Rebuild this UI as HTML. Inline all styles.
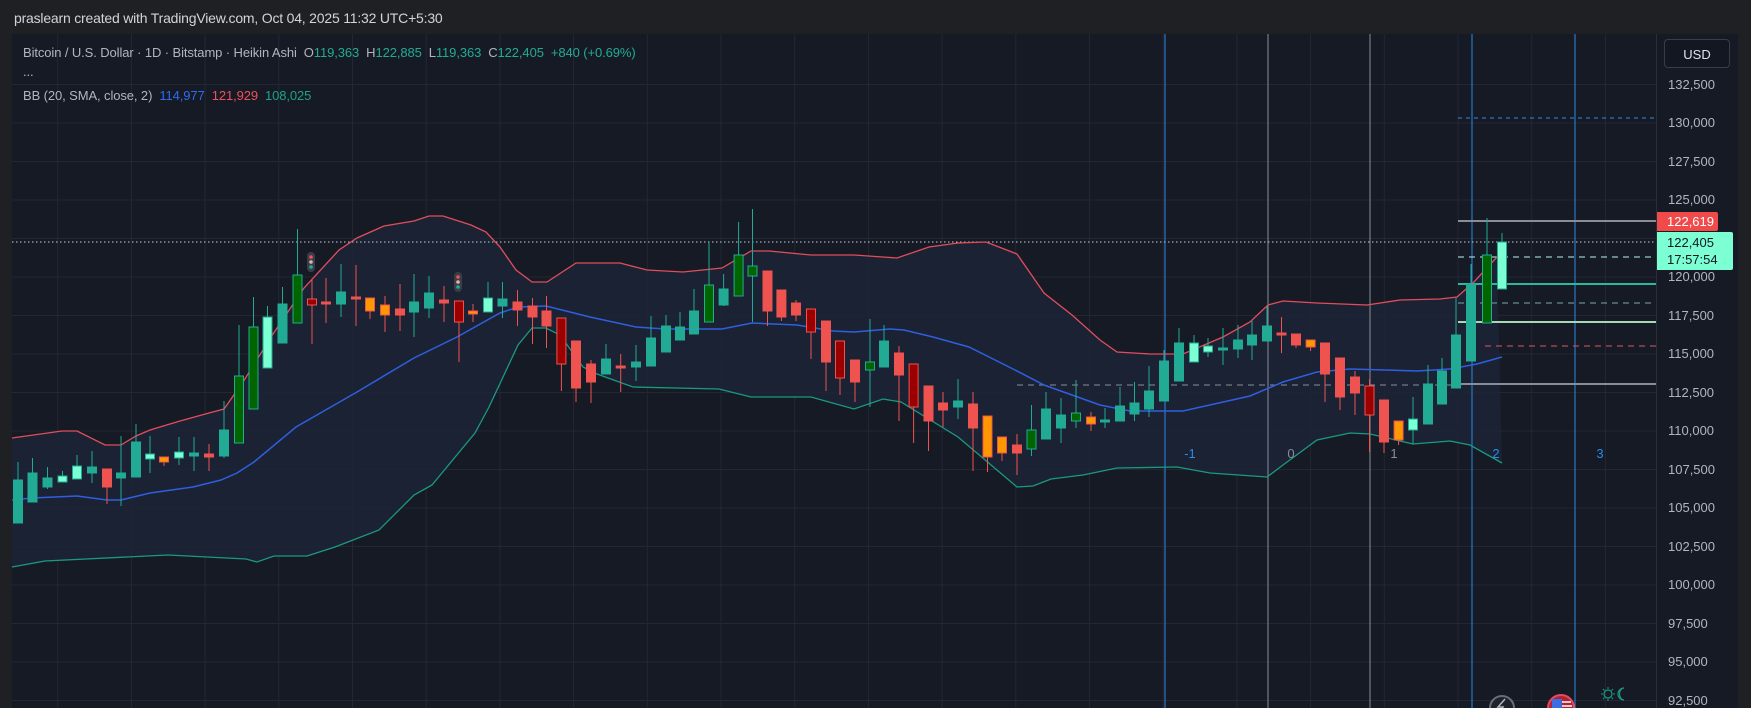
<!DOCTYPE html>
<html><head><meta charset="utf-8">
<style>
html,body{margin:0;padding:0;width:1751px;height:708px;overflow:hidden;background:#1f2023;font-family:"Liberation Sans",sans-serif;}
#hdr{position:absolute;left:14px;top:10px;color:#d1d4dc;font-size:14px;letter-spacing:-0.2px}
#chart{position:absolute;left:12px;top:34px;width:1726px;height:674px;background:#161a25;}
svg{position:absolute;left:0;top:0}
.lg{position:absolute;left:23px;font-size:13px;color:#b2b5be;white-space:nowrap;letter-spacing:-0.1px}
.g{color:#22ab94}
.ax{position:absolute;left:1668px;font-size:13px;color:#b2b5be}
</style></head><body>
<div id="hdr">praslearn created with TradingView.com, Oct 04, 2025 11:32 UTC+5:30</div>
<div id="chart"></div>
<svg width="1751" height="708" id="s"></svg>
<div class="lg" style="top:45px">Bitcoin / U.S. Dollar · 1D · Bitstamp · Heikin Ashi&nbsp; O<span class="g">119,363</span>&nbsp; H<span class="g">122,885</span>&nbsp; L<span class="g">119,363</span>&nbsp; C<span class="g">122,405</span>&nbsp; <span class="g">+840 (+0.69%)</span></div>
<div class="lg" style="top:64px">...</div>
<div class="lg" style="top:88px">BB (20, SMA, close, 2)&nbsp; <span style="color:#2f6bf0">114,977</span>&nbsp; <span style="color:#f0505d">121,929</span>&nbsp; <span style="color:#1ea287">108,025</span></div>
<div style="position:absolute;left:1664px;top:39px;width:66px;height:29px;border:1px solid #3a3d48;border-radius:4px;background:#131722;color:#e0e3eb;font-size:13px;line-height:29px;text-align:center;box-sizing:border-box">USD</div>
<div id="axl"></div>
<div style="position:absolute;left:1657px;top:212px;width:61px;height:19px;background:#f04a4a;color:#fff;font-size:13px;line-height:19px;padding-left:10px;box-sizing:border-box;border-radius:0 2px 2px 0">122,619</div>
<div style="position:absolute;left:1657px;top:232px;width:76px;height:38px;background:#7dffd4;color:#131722;font-size:13px;line-height:17px;padding:2px 0 0 10px;box-sizing:border-box;border-radius:0 2px 2px 0">122,405<br>17:57:54</div>
<script>
const s=document.getElementById('s');let h='';
// grid
for(let p=92500;p<=132500;p+=2500){let y=277-(p-120000)/2500*38.5;h+=`<line x1="12" x2="1656" y1="${y}" y2="${y}" stroke="#232734" stroke-width="1"/>`;}
for(let x=1458+73.7*3;x>12;x-=73.7){if(x<1656)h+=`<line x1="${x}" x2="${x}" y1="34" y2="708" stroke="#232734"/>`;}
h+=`<line x1="1656.5" x2="1656.5" y1="34" y2="708" stroke="#2a2e39"/>`;
h+=`<rect x="1738" y="34" width="13" height="674" fill="#1f2023"/>`;
const up=[[12,438],[62,431],[77,431],[105,445],[121,445],[136,436],[150,430],[180,421],[209,413],[224,409],[243,382],[271,337],[304,288],[339,250],[357,238],[384,226],[414,221],[429,216],[443,216],[471,225],[486,232],[500,247],[516,270],[532,282],[547,282],[576,263],[620,263],[647,270],[683,272],[722,268],[751,251],[769,251],[811,255],[854,255],[897,258],[929,247],[958,243],[986,242],[1017,254],[1044,293],[1072,315],[1100,340],[1117,352],[1150,354],[1183,354],[1223,337],[1250,322],[1268,305],[1283,301],[1317,303],[1367,305],[1400,300],[1440,299],[1457,297],[1473,283],[1497,257]];
const lo=[[12,567],[45,561],[168,555],[246,559],[257,562],[274,556],[307,556],[335,547],[379,530],[414,495],[432,485],[475,433],[489,407],[518,345],[532,328],[546,328],[560,335],[583,367],[597,374],[633,387],[719,389],[751,397],[811,397],[854,409],[883,399],[901,402],[958,437],[1017,487],[1033,486],[1051,479],[1083,475],[1117,468],[1177,467],[1210,473],[1267,477],[1283,465],[1317,440],[1350,433],[1370,434],[1413,444],[1450,441],[1470,445],[1502,463]];
const mid=[[12,500],[32,498],[77,496],[107,500],[121,500],[150,493],[193,487],[221,480],[237,473],[254,462],[296,427],[357,392],[414,358],[457,337],[500,313],[518,307],[546,306],[590,317],[636,327],[665,329],[722,329],[752,323],[797,325],[833,331],[854,332],[890,329],[904,330],[933,337],[969,347],[1015,370],[1044,385],[1100,405],[1130,411],[1183,411],[1250,396],[1283,382],[1317,372],[1350,369],[1417,371],[1450,369],[1477,364],[1502,357]];
const pts=a=>a.map(p=>p.join(',')).join(' ');
h+=`<polygon points="${pts(up)} ${pts(lo.slice().reverse())}" fill="#1b2436" opacity="0.85"/>`;
// vertical markers
[[1165,'#2a8be8'],[1268,'#8a8d96'],[1370,'#8a8d96'],[1472,'#2a8be8'],[1575,'#2a8be8']].forEach(v=>h+=`<line x1="${v[0]}" x2="${v[0]}" y1="34" y2="708" stroke="${v[1]}" stroke-width="1"/>`);
// horizontal levels
h+=`<line x1="12" x2="1656" y1="242" y2="242" stroke="#c8ccd6" stroke-dasharray="1.5,2.5"/>`;
h+=`<line x1="1458" x2="1656" y1="118" y2="118" stroke="#2a8be8" stroke-dasharray="4,4"/>`;
h+=`<line x1="1458" x2="1656" y1="221" y2="221" stroke="#8a8d96" stroke-width="2"/>`;
h+=`<line x1="1458" x2="1656" y1="257" y2="257" stroke="#b8f5ea" stroke-dasharray="6,5"/>`;
h+=`<line x1="1458" x2="1656" y1="284" y2="284" stroke="#2bb89f" stroke-width="2"/>`;
h+=`<line x1="1458" x2="1656" y1="303" y2="303" stroke="#7aa8a0" stroke-dasharray="6,5"/>`;
h+=`<line x1="1458" x2="1656" y1="322" y2="322" stroke="#a7d8b5" stroke-width="2"/>`;
h+=`<line x1="1485" x2="1656" y1="346" y2="346" stroke="#e0545f" stroke-dasharray="6,5"/>`;
h+=`<line x1="1017" x2="1458" y1="385" y2="385" stroke="#8a8d96" stroke-dasharray="6,5"/>`;
h+=`<line x1="1458" x2="1656" y1="384" y2="384" stroke="#8a8d96" stroke-width="2"/>`;
h+=`<polyline points="${pts(up)}" fill="none" stroke="#e04e5c" stroke-width="1.3"/>`;
h+=`<polyline points="${pts(lo)}" fill="none" stroke="#1a9a80" stroke-width="1.3"/>`;
h+=`<polyline points="${pts(mid)}" fill="none" stroke="#2f5fe0" stroke-width="1.5"/>`;
const C={T:['#22ab94','#22ab94','#22ab94'],M:['#7dffd4','#22ab94','#22ab94'],G:['#006400','#22ab94','#22ab94'],R:['#ef5350','#ef5350','#ef5350'],D:['#9b0000','#ef5350','#ef5350'],O:['#ff9800','#ef5350','#ef5350']};
const K=[[18,480,523,462,523,'T'],[32.5,473,502,458,502,'T'],[47.5,478,487,467,489,'T'],[62.5,476,482,471,482,'M'],[77,466,479,455,479,'M'],[92,467,473,451,483,'T'],[107,469,487,469,504,'R'],[121,473,478,436,506,'T'],[136,442,477,424,477,'T'],[150,454,459,436,473,'M'],[164,457,462,457,466,'O'],[179,452,458,437,465,'M'],[194,453,456,437,471,'T'],[209,454,457,444,471,'R'],[224,430,456,401,458,'T'],[239,376,443,325,443,'G'],[253.5,327,409,297,409,'G'],[267.5,317,368,306,368,'M'],[282.5,304,343,287,343,'T'],[297.5,275,323,229,323,'G'],[312,299,305,280,344,'D'],[326,302,304,278,323,'R'],[341,292,304,264,317,'T'],[356,297,298,265,326,'R'],[370,298,311,298,319,'O'],[385,305,315,296,332,'O'],[400,309,315,284,331,'R'],[414,302,312,274,337,'T'],[429,293,308,276,318,'T'],[444,300,303,286,322,'R'],[459,301,322,301,362,'D'],[473,311,314,304,322,'O'],[488,298,312,282,312,'M'],[502.5,299,306,282,318,'T'],[517.5,302,310,290,326,'R'],[532.5,306,317,298,344,'R'],[546.5,311,326,296,348,'R'],[561.4,318,364,318,391,'D'],[576,341,388,341,402,'R'],[591,364,382,360,403,'R'],[606,359,374,344,374,'T'],[620.7,366,368,354,392,'R'],[636,362,367,345,381,'T'],[651,338,366,316,366,'T'],[666,326,352,315,352,'T'],[680,327,340,312,340,'T'],[694,311,334,289,334,'T'],[709,285,322,242,322,'G'],[723.6,289,305,274,306,'T'],[738.6,255,296,222,296,'G'],[752.5,266,276,209,322,'G'],[767.5,271,311,271,326,'R'],[781.4,290,317,290,321,'R'],[796,303,315,300,321,'R'],[811,309,332,309,359,'D'],[826,321,362,321,391,'R'],[840,341,378,341,395,'D'],[855,360,382,360,402,'R'],[870,362,370,319,407,'G'],[884,341,367,325,367,'T'],[899,353,375,346,421,'R'],[913.6,364,407,364,443,'D'],[928.5,386,421,386,451,'R'],[943,403,410,392,427,'R'],[958,401,407,379,419,'T'],[973,404,428,392,471,'R'],[987.5,416,457,416,472,'O'],[1002,437,453,437,461,'O'],[1017,445,453,434,475,'R'],[1031.5,430,449,405,456,'G'],[1046,409,439,392,439,'T'],[1061,415,428,398,443,'T'],[1076,413,421,380,428,'G'],[1091,417,424,412,431,'O'],[1105,420,422,408,428,'T'],[1120,406,421,387,421,'T'],[1134.5,403,414,382,421,'T'],[1149,391,409,366,417,'T'],[1164,361,401,350,401,'T'],[1179,343,381,328,381,'T'],[1194,343,362,335,362,'M'],[1208,346,352,338,357,'M'],[1223,348,349,328,365,'T'],[1238,340,349,325,358,'T'],[1252,335,345,321,360,'T'],[1267,326,341,306,341,'T'],[1281.5,333,335,317,353,'R'],[1296,334,345,334,348,'R'],[1310.6,340,347,340,351,'O'],[1325,343,374,343,402,'R'],[1340,358,397,358,410,'R'],[1355,377,393,371,415,'R'],[1369.5,386,415,379,452,'D'],[1384,400,442,400,453,'R'],[1398.6,421,440,421,445,'O'],[1413,419,430,397,444,'M'],[1428,384,424,365,424,'T'],[1442,371,404,358,404,'T'],[1456,335,388,298,388,'T'],[1471,284,361,264,361,'T'],[1487,255,323,218,323,'G'],[1502,242,289,233,289,'M']];
K.forEach(k=>{const c=C[k[5]];const x=k[0];h+=`<line x1="${x}" x2="${x}" y1="${k[3]}" y2="${k[4]}" stroke="${c[2]}" stroke-width="1"/>`;
let bh=Math.max(k[2]-k[1],2);h+=`<rect x="${x-4.5}" y="${k[1]}" width="9" height="${bh}" fill="${c[0]}" stroke="${c[1]}" stroke-width="1"/>`;});
// traffic lights
[[311,262],[458,282]].forEach(t=>{h+=`<rect x="${t[0]-4}" y="${t[1]-10}" width="8" height="20" rx="4" fill="#3a3d48"/><circle cx="${t[0]}" cy="${t[1]-5}" r="1.8" fill="#ef5350"/><circle cx="${t[0]}" cy="${t[1]}" r="1.8" fill="#e8b0b0"/><circle cx="${t[0]}" cy="${t[1]+5}" r="1.8" fill="#22ab94"/>`;});
// labels
[[1190,'-1','#2a8be8'],[1291,'0','#8a8d96'],[1394,'1','#8a8d96'],[1496,'2','#2a8be8'],[1600,'3','#2a8be8']].forEach(l=>h+=`<text x="${l[0]}" y="458" fill="${l[2]}" font-size="13" font-family="Liberation Sans" text-anchor="middle">${l[1]}</text>`);
// bottom icons
h+=`<circle cx="1502" cy="708" r="12" fill="#1e222d" stroke="#6a6d78" stroke-width="2"/><path d="M1505 699 L1498 707 L1503 707 L1499 713" fill="none" stroke="#b2b5be" stroke-width="1.5"/>`;
h+=`<circle cx="1561" cy="708" r="13" fill="#b22234" stroke="#e04e5c" stroke-width="2"/><rect x="1552" y="699" width="10" height="9" fill="#3c6ee0"/><path d="M1562 702h9M1562 706h10M1549 710h24" stroke="#fff" stroke-width="1.5"/>`;
h+=`<circle cx="1608" cy="694" r="4" fill="none" stroke="#1a9a80" stroke-width="1.2"/><path d="M1608 687v2M1608 699v2M1601 694h2M1613 694h2M1603 689l1.5 1.5M1611.5 697.5l1.5 1.5M1603 699l1.5-1.5M1611.5 690.5l1.5-1.5" stroke="#1a9a80" stroke-width="1"/><path d="M1624 688 a6 6 0 1 0 0 12 a4.5 6 0 1 1 0 -12z" fill="none" stroke="#1a9a80" stroke-width="1.2"/>`;
s.innerHTML=h;
let a='';for(let p=92500;p<=132500;p+=2500){let y=277-(p-120000)/2500*38.5;if(p===122500)continue;a+=`<div class="ax" style="top:${y-8}px">${p.toLocaleString('en-US')}</div>`;}
document.getElementById('axl').innerHTML=a;
</script>
</body></html>
